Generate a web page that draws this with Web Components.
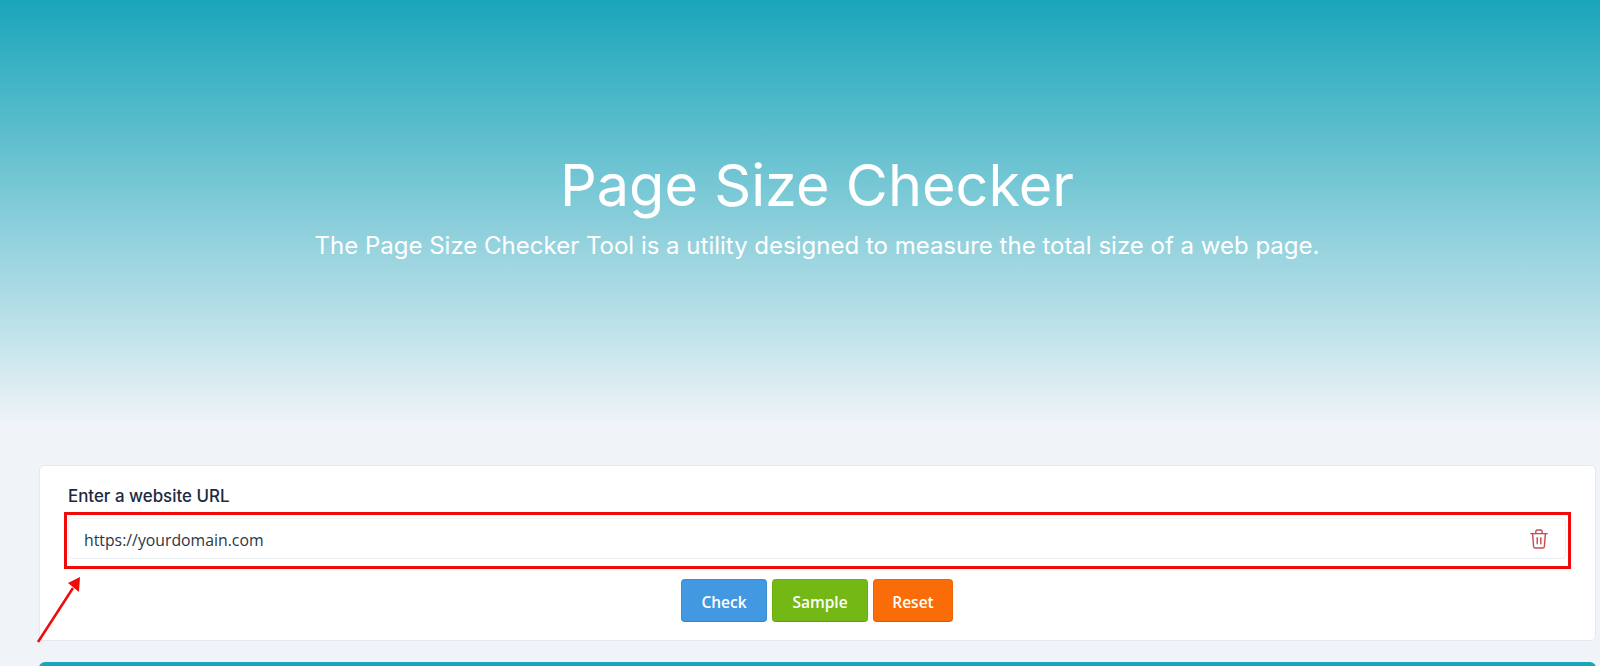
<!DOCTYPE html>
<html lang="en">
<head>
<meta charset="utf-8">
<title>Page Size Checker</title>
<style>
  html, body { margin: 0; height: 666px; overflow: hidden; }
  body { background: #f0f4f8; font-family: Inter, "Liberation Sans", sans-serif; }
</style>
</head>
<body>
<page-hero>
  <span slot="title">Page Size Checker</span>
  <span slot="subtitle">The Page Size Checker Tool is a utility designed to measure the total size of a web page.</span>
</page-hero>
<main-panel>
  <url-form label="Enter a website URL" value="https://yourdomain.com"></url-form>
</main-panel>
<script>
class PageHero extends HTMLElement {
  constructor() {
    super();
    this.attachShadow({ mode: "open" });
    this.shadowRoot.innerHTML = `
      <style>
        :host {
          display: flex;
          flex-direction: column;
          align-items: center;
          height: 465px;
          box-sizing: border-box;
          padding: 149px 5px 0 39px;
          color: #fff;
          background: linear-gradient(180deg, #1aa5ba 0%, #f0f4f8 92%);
        }
        h1 { margin: 0; font-size: 57.6px; line-height: 72px; font-weight: 400; }
        p { margin: 0; font-size: 24px; line-height: 50px; font-weight: 400; }
      </style>
      <h1><slot name="title"></slot></h1>
      <p><slot name="subtitle"></slot></p>
    `;
  }
}

class MainPanel extends HTMLElement {
  constructor() {
    super();
    this.attachShadow({ mode: "open" });
    this.shadowRoot.innerHTML = `
      <style>
        :host { display: block; padding: 0 4px 0 39px; }
        .card {
          height: 176px;
          box-sizing: border-box;
          background: #fff;
          border: 1px solid #e5e9ef;
          border-radius: 5px;
          padding: 20px 29px 0 28px;
        }
        .bar {
          height: 30px;
          margin-top: 21px;
          background: #1aa5ba;
          border-radius: 6px 6px 0 0;
        }
      </style>
      <div class="card"><slot></slot></div>
      <div class="bar"></div>
    `;
  }
}

class UrlForm extends HTMLElement {
  constructor() {
    super();
    this.attachShadow({ mode: "open" });
    this.shadowRoot.innerHTML = `
      <style>
        :host { display: block; position: relative; }
        label {
          display: block;
          font-size: 16.9px;
          line-height: 20px;
          font-weight: 500;
          color: #1c2a3f;
          margin-bottom: 12px;
        }
        .field {
          display: flex;
          align-items: center;
          justify-content: space-between;
          height: 41px;
          box-sizing: border-box;
          border: 1px solid #eceff3;
          border-radius: 4px;
          padding: 0 17px 0 15px;
          font: 15.8px "Open Sans", "Noto Sans", sans-serif;
          color: #2a3547;
        }
        .value { padding-top: 2px; }
        svg.trash { width: 18px; height: 20px; display: block; }
        .actions {
          display: flex;
          justify-content: center;
          gap: 5px;
          margin-top: 20px;
        }
        /* annotation drawn over the form */
        .mark {
          position: absolute;
          left: -4px;
          top: 26px;
          right: -5px;
          height: 57px;
          box-sizing: border-box;
          border: 3px solid #f00a0a;
          pointer-events: none;
        }
        .arrow {
          position: absolute;
          left: -33px;
          top: 91px;
          width: 50px;
          height: 70px;
          overflow: visible;
        }
      </style>
      <label></label>
      <div class="field">
        <span class="value"></span>
        <svg class="trash" viewBox="0 0 18 20" fill="none" stroke="#c9494f" stroke-width="1.4" stroke-linejoin="round" stroke-linecap="round">
          <path d="M.8 4.6h16.4"/>
          <path d="M5.8 4.6V2.8Q5.8 1 7.6 1h2.8q1.8 0 1.8 1.8v1.8"/>
          <path d="M2.6 4.6l1 12.8q.2 1.6 1.8 1.6h7.2q1.6 0 1.8-1.6l1-12.8"/>
          <path d="M7.2 8.8v6M10.8 8.8v6"/>
        </svg>
      </div>
      <div class="actions">
        <flat-button color="#4299e1" style="width:86px">Check</flat-button>
        <flat-button color="#74b816" style="width:96px">Sample</flat-button>
        <flat-button color="#f96c07" style="width:80px">Reset</flat-button>
      </div>
      <div class="mark"></div>
      <svg class="arrow" viewBox="0 0 50 70">
        <path d="M3 65L38 11" stroke="#f00a0a" stroke-width="2.5" fill="none"/>
        <path d="M45 0L33 6L44 15Z" fill="#f00a0a"/>
      </svg>
    `;
  }

  connectedCallback() {
    this.shadowRoot.querySelector("label").textContent = this.getAttribute("label");
    this.shadowRoot.querySelector(".value").textContent = this.getAttribute("value");
  }
}

class FlatButton extends HTMLElement {
  constructor() {
    super();
    this.attachShadow({ mode: "open" });
    this.shadowRoot.innerHTML = `
      <style>
        :host {
          display: inline-flex;
          align-items: center;
          justify-content: center;
          height: 43px;
          box-sizing: border-box;
          padding-top: 2px;
          border-radius: 4px;
          box-shadow: inset 0 0 0 1px rgba(0, 0, 0, .06), inset 0 -1px 0 rgba(0, 0, 0, .08);
          color: #fff;
          font: 600 15.5px "Open Sans", "Noto Sans", sans-serif;
          cursor: pointer;
        }
      </style>
      <slot></slot>
    `;
  }

  connectedCallback() {
    this.style.background = this.getAttribute("color");
  }
}

customElements.define("page-hero", PageHero);
customElements.define("main-panel", MainPanel);
customElements.define("url-form", UrlForm);
customElements.define("flat-button", FlatButton);
</script>
</body>
</html>
